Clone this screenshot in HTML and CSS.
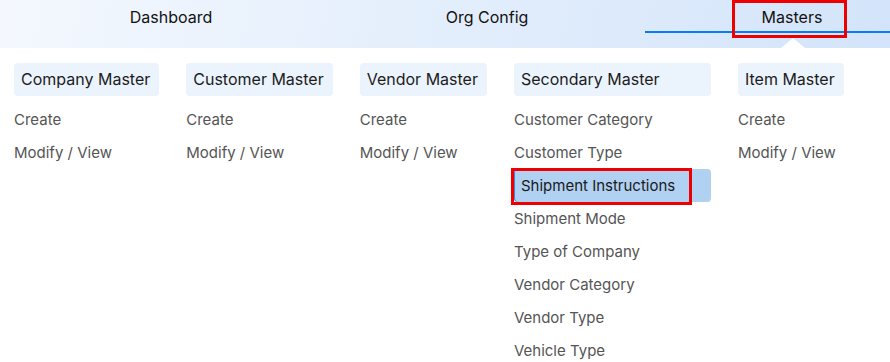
FILE: index.html
```html
<!DOCTYPE html>
<html>
<head>
<meta charset="utf-8">
<link rel="stylesheet" href="styles.css">
</head>
<body>
<header class="topbar">
  <nav class="nav">
    <div class="nav-item">Dashboard</div>
    <div class="nav-item">Org Config</div>
    <div class="nav-item active">Masters<span class="mark mark-nav"></span><span class="notch"></span></div>
  </nav>
</header>
<section class="menu">
  <div class="col">
    <div class="col-head">Company Master</div>
    <div class="link">Create</div>
    <div class="link">Modify / View</div>
  </div>
  <div class="col">
    <div class="col-head">Customer Master</div>
    <div class="link">Create</div>
    <div class="link">Modify / View</div>
  </div>
  <div class="col">
    <div class="col-head">Vendor Master</div>
    <div class="link">Create</div>
    <div class="link">Modify / View</div>
  </div>
  <div class="col col-wide">
    <div class="col-head">Secondary Master</div>
    <div class="link">Customer Category</div>
    <div class="link">Customer Type</div>
    <div class="link selected">Shipment Instructions<span class="mark mark-item"></span></div>
    <div class="link">Shipment Mode</div>
    <div class="link">Type of Company</div>
    <div class="link">Vendor Category</div>
    <div class="link">Vendor Type</div>
    <div class="link">Vehicle Type</div>
  </div>
  <div class="col">
    <div class="col-head">Item Master</div>
    <div class="link">Create</div>
    <div class="link">Modify / View</div>
  </div>
</section>
</body>
</html>
```
FILE: styles.css
```css
html, body {
  margin: 0;
  padding: 0;
  background: #ffffff;
  font-family: Inter, "Noto Sans", "Liberation Sans", sans-serif;
  overflow: hidden;
}

.topbar {
  height: 48px;
  background: linear-gradient(100deg, #f4f8fe 0%, #e3eefc 50%, #d3e4fa 100%);
  position: relative;
  overflow: hidden;
}

.nav {
  display: flex;
  padding-left: 24px;
  width: 1000px;
}

.nav-item {
  flex: 0 0 294px;
  box-sizing: border-box;
  text-align: center;
  font-size: 16px;
  line-height: 20px;
  color: #121212;
  padding: 7px 0 4px;
  height: 33px;
  position: relative;
}

.nav-item:nth-child(1) { margin-right: 22px; }
.nav-item:nth-child(2) { margin-right: 11px; }

.nav-item.active {
  border-bottom: 2px solid #0a7bf2;
}

.mark {
  position: absolute;
  box-sizing: border-box;
  border: 3px solid #ee0000;
  pointer-events: none;
}

.mark-nav {
  left: 87px;
  top: 0;
  width: 115px;
  height: 38px;
}

.notch {
  position: absolute;
  left: 136px;
  top: 38px;
  width: 0;
  height: 0;
  border-left: 12px solid transparent;
  border-right: 12px solid transparent;
  border-bottom: 10px solid #ffffff;
}

.menu {
  display: flex;
  align-items: flex-start;
  gap: 27px;
  padding: 15px 14px 0;
}

.col {
  display: flex;
  flex-direction: column;
}

.col-wide {
  width: 197px;
}

.col-head {
  background: #ebf3fd;
  border-radius: 4px;
  font-size: 16px;
  line-height: 33px;
  height: 33px;
  padding: 0 9px 0 7px;
  color: #1c1c1c;
  margin-bottom: 7px;
  white-space: nowrap;
}

.link {
  font-size: 15px;
  line-height: 33px;
  height: 33px;
  color: #555555;
  white-space: nowrap;
  position: relative;
}

.link.selected {
  background: #b0d1f1;
  border-radius: 4px;
  padding-left: 7px;
  color: #1a1a1a;
  box-shadow: inset 1px 0 0 #3d86e0;
}

.mark-item {
  left: -3px;
  top: -1px;
  width: 181px;
  height: 37px;
}
```
